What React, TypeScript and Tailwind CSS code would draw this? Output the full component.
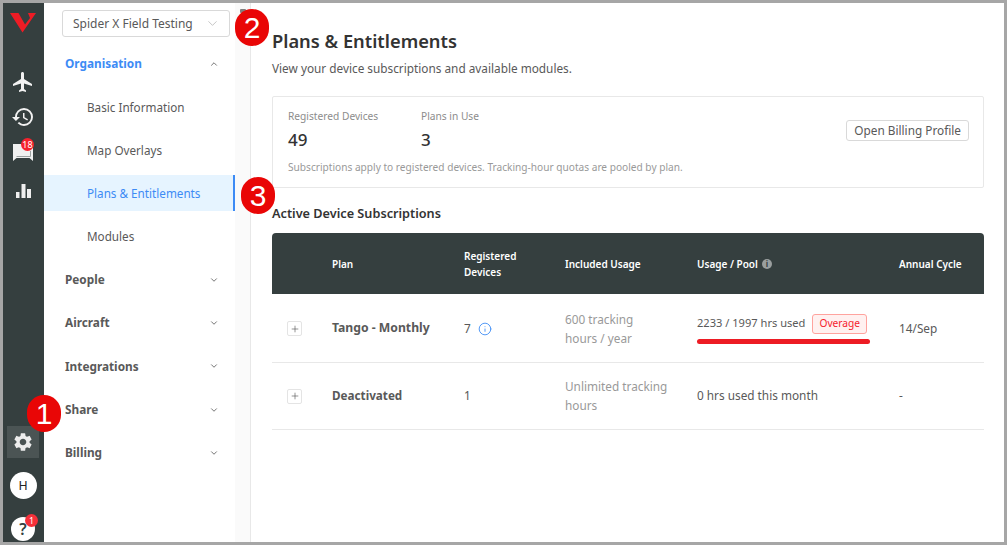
import { ChevronDown, ChevronUp, Info, Plus } from "lucide-react";
import { MdFlight, MdHistory, MdSettings } from "react-icons/md";

const menuItems = ["People", "Aircraft", "Integrations", "Share", "Billing"];

const subItems = ["Basic Information", "Map Overlays", "Plans & Entitlements", "Modules"];

function Marker({ n, className }: { n: number; className: string }) {
  return (
    <div
      className={`absolute z-20 flex h-[37px] w-[34px] items-center justify-center rounded-full bg-[#e90606] font-['Liberation_Sans',sans-serif] text-[30px] text-white ${className}`}
    >
      {n}
    </div>
  );
}

function Rail() {
  return (
    <div className="flex w-[41px] shrink-0 flex-col items-center bg-[#353f3f] pr-px">
      <svg viewBox="0 0 26 20" className="mt-[10px] h-[20px] w-[26px]">
        <path d="M0 0 L8.5 0 L15 11.5 L20 5 L18 0 L26 0 L12.5 19.5 Z" fill="#ee1c25" />
      </svg>
      <MdFlight className="mt-[37px] text-[#f2f2f2]" size={24} />
      <MdHistory className="mt-[11px] text-[#f2f2f2]" size={24} />
      <div className="relative mt-[15px] h-[17px] w-[20px]">
        <svg viewBox="0 0 20 17" className="h-[17px] w-[20px]">
          <path d="M0 0 H20 V17 L16.5 14 H3.5 L0 17 Z" fill="#f0f0f0" />
          <path d="M3.5 12.5 H17.5 V7" fill="none" stroke="#9aa0a0" strokeWidth="1" />
        </svg>
        <span className="absolute top-[-6px] right-[-1px] flex h-[13px] w-[13px] items-center justify-center rounded-full bg-[#f5222d] text-[9px] leading-none text-white">
          18
        </span>
      </div>
      <svg viewBox="0 0 15 14" className="mt-[23px] h-[14px] w-[15px]">
        <path d="M0 8 H3.5 V14 H0 Z M5.5 0 H9.5 V14 H5.5 Z M11 5 H15 V14 H11 Z" fill="#eeeeee" />
      </svg>
      <div className="mt-auto flex h-[32px] w-[32px] items-center justify-center bg-[#4b5454]">
        <MdSettings className="text-[#ededed]" size={22} />
      </div>
      <div className="mt-[14px] flex h-[27px] w-[27px] items-center justify-center rounded-full bg-white font-['Liberation_Sans',sans-serif] text-[12px] text-[#222]">
        H
      </div>
      <div className="relative mt-[18px] mb-[1px] flex h-[24px] w-[24px] items-center justify-center rounded-full bg-white text-[16px] font-semibold text-[#353f3f]">
        ?
        <span className="absolute top-[-3px] right-[-3px] flex h-[13px] w-[13px] items-center justify-center rounded-full bg-[#f5303a] text-[9px] font-normal leading-none text-white">
          1
        </span>
      </div>
    </div>
  );
}

function Menu() {
  return (
    <div className="flex w-[207px] shrink-0 border-r border-[#e8e8e8] bg-[#fafafa]">
      <div className="w-[191px] bg-white">
        <div className="flex h-[39px] items-start pt-[7px] pl-[18px]">
          <div className="flex h-[27px] w-[168px] items-center justify-between rounded-[3px] border border-[#d9d9d9] bg-white pr-[9px] pl-[10px] text-[12px] text-[#595959]">
            <span>Spider X Field Testing</span>
            <ChevronDown size={15} strokeWidth={1} className="text-[#a3a3a3]" />
          </div>
        </div>
        <div className="flex h-[43px] items-center justify-between pr-[16px] pl-[21px] text-[11.8px] font-bold text-[#3d8bf5]">
          <span>Organisation</span>
          <ChevronUp size={10} className="text-[#595959]" />
        </div>
        <div className="flex flex-col gap-[7.2px] py-[3.6px]">
          {subItems.map((item) => {
            const active = item === "Plans & Entitlements";
            return (
              <div
                key={item}
                className={`flex h-[36px] items-center pt-[2px] pl-[43px] text-[11.7px] ${
                  active
                    ? "border-r-2 border-[#3d8bf5] bg-[#e6f4ff] text-[#3d8bf5]"
                    : "text-[#595959]"
                }`}
              >
                {item}
              </div>
            );
          })}
        </div>
        {menuItems.map((item) => (
          <div
            key={item}
            className="flex h-[43.25px] items-center justify-between pt-[1px] pr-[16px] pl-[21px] text-[11.8px] font-bold text-[#595959]"
          >
            <span>{item}</span>
            <ChevronDown size={10} className="text-[#595959]" />
          </div>
        ))}
      </div>
    </div>
  );
}

function Stat({ label, value, className }: { label: string; value: string; className: string }) {
  return (
    <div className={className}>
      <div className="text-[10.2px] leading-[16px] text-[#8c8c8c]">{label}</div>
      <div className="mt-[3px] text-[17px] leading-[26px] font-medium text-[#333]">{value}</div>
    </div>
  );
}

const tableCols = "grid grid-cols-[60px_132px_101px_132px_202px_1fr] items-center";

function PlusBox() {
  return (
    <div className="ml-[15px] flex h-[15px] w-[15px] items-center justify-center rounded-[2px] border border-[#e4e4e4] text-[#555]">
      <Plus size={10} strokeWidth={1.5} />
    </div>
  );
}

function Main() {
  return (
    <div className="flex min-w-0 flex-1 flex-col pr-[20px] pl-[21px]">
      <h1 className="mt-[24px] text-[18.3px] leading-[28px] font-semibold text-[#333]">
        Plans &amp; Entitlements
      </h1>
      <p className="mt-[4px] text-[11.8px] leading-[18px] text-[#595959]">
        View your device subscriptions and available modules.
      </p>
      <div className="relative mt-[19px] h-[92px] rounded-[2px] border border-[#e8e8e8] px-[15px] pt-[11px]">
        <div className="flex">
          <Stat label="Registered Devices" value="49" className="w-[133px]" />
          <Stat label="Plans in Use" value="3" className="" />
        </div>
        <p className="mt-[6px] text-[10.15px] leading-[16px] text-[#999]">
          Subscriptions apply to registered devices. Tracking-hour quotas are pooled by plan.
        </p>
        <button className="absolute top-[23px] right-[14px] h-[21px] rounded-[3px] border border-[#d9d9d9] bg-white px-[7px] text-[11.8px] leading-[19px] text-[#595959]">
          Open Billing Profile
        </button>
      </div>
      <h2 className="mt-[16px] text-[12.7px] leading-[18px] font-semibold text-[#333]">
        Active Device Subscriptions
      </h2>
      <div className="mt-[11px]">
        <div className={`${tableCols} h-[61px] rounded-t-[4px] bg-[#353f3f] text-[10px] leading-[16px] font-semibold text-white`}>
          <div />
          <div>Plan</div>
          <div>
            Registered
            <br />
            Devices
          </div>
          <div>Included Usage</div>
          <div className="flex items-center gap-[4px]">
            Usage / Pool
            <span className="flex h-[10px] w-[10px] items-center justify-center rounded-full bg-[#9a9f9f] text-[8px] leading-none font-bold text-[#353f3f]">
              i
            </span>
          </div>
          <div>Annual Cycle</div>
        </div>
        <div className={`${tableCols} h-[69px] border-b border-[#e8e8e8] pt-[1px] text-[11.8px] text-[#595959]`}>
          <PlusBox />
          <div className="text-[12.2px] font-bold">Tango - Monthly</div>
          <div className="flex items-center gap-[7px]">
            7 <Info size={14} strokeWidth={1.5} className="text-[#3d8bf5]" />
          </div>
          <div className="leading-[19px] text-[#999]">
            600 tracking
            <br />
            hours / year
          </div>
          <div className="relative mt-[-10px]">
            <div className="flex items-center gap-[7px]">
              <span className="text-[11.1px]">2233 / 1997 hrs used</span>
              <span className="flex h-[20px] items-center rounded-[3px] border border-[#ffa39e] bg-[#fff1f0] px-[6px] text-[10.2px] text-[#f5222d]">
                Overage
              </span>
            </div>
            <div className="absolute top-[25px] left-0 h-[5px] w-[173px] rounded-full bg-[#ed1c24]" />
          </div>
          <div>14/Sep</div>
        </div>
        <div className={`${tableCols} h-[67px] border-b border-[#e8e8e8] text-[11.8px] text-[#595959]`}>
          <PlusBox />
          <div className="text-[11.7px] font-bold">Deactivated</div>
          <div>1</div>
          <div className="leading-[19px] text-[#999]">
            Unlimited tracking
            <br />
            hours
          </div>
          <div>0 hrs used this month</div>
          <div>-</div>
        </div>
      </div>
    </div>
  );
}

export default function App() {
  return (
    <div className="relative flex h-[545px] w-[1007px] overflow-hidden border-[3px] border-[#a6a6a6] bg-white font-['Noto_Sans',sans-serif]">
      <Rail />
      <Menu />
      <Main />
      <div className="absolute top-[6px] left-[237px] z-10 h-[4px] w-[6px] rounded-[1px] bg-[#808080]" />
      <Marker n={1} className="top-[392px] left-[24px]" />
      <Marker n={2} className="top-[6px] left-[232px]" />
      <Marker n={3} className="top-[174px] left-[238px]" />
    </div>
  );
}
